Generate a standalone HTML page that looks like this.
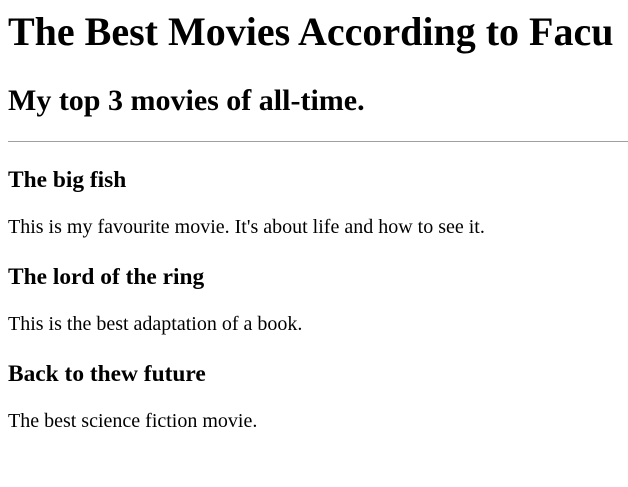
<!DOCTYPE html>
<html>
<head>
<meta charset="utf-8">
<style>
body{margin:8px;font-family:"Liberation Serif",serif;color:#000;background:#fff;}
h1{font-size:40px;margin:0 0 29px;}
h2{font-size:30px;margin:29px 0 23px;}
hr{margin:0 -8px 0.5px 0;border:0;border-top:1px solid #a0a0a0;height:0;}
h3{font-size:23.4px;margin:24.5px 0 22.5px;}
p{font-size:20px;margin:22.5px 0;}
</style>
</head>
<body>
<h1>The Best Movies According to Facu</h1>
<h2>My top 3 movies of all-time.</h2>
<hr>
<h3>The big fish</h3>
<p>This is my favourite movie. It's about life and how to see it.</p>
<h3>The lord of the ring</h3>
<p>This is the best adaptation of a book.</p>
<h3>Back to thew future</h3>
<p>The best science fiction movie.</p>
</body>
</html>
